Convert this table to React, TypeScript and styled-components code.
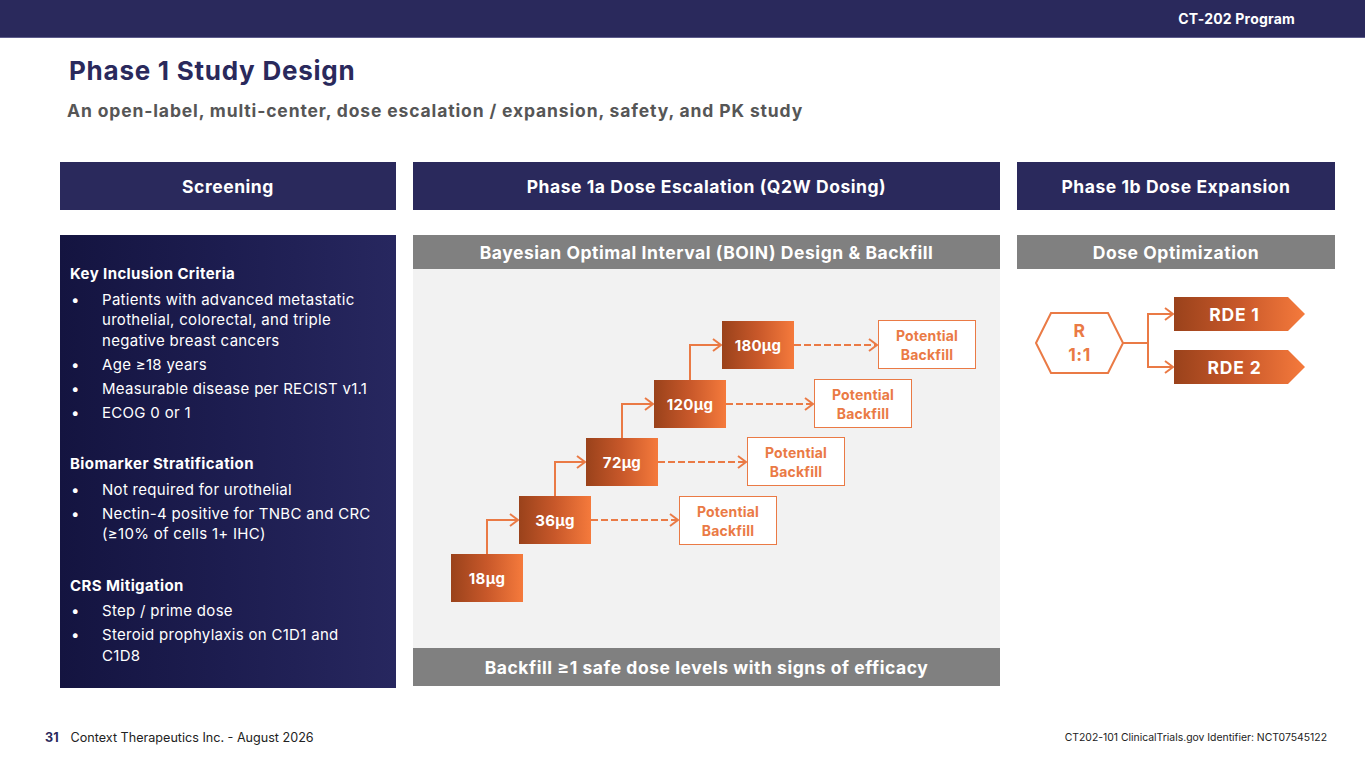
import React from "react";
import styled, { createGlobalStyle } from "styled-components";

const GlobalStyle = createGlobalStyle`
  html, body {
    margin: 0;
    padding: 0;
    background: #ffffff;
  }
  body {
    font-family: "Inter", "Noto Sans", "Liberation Sans", sans-serif;
  }
`;

const NAVY = "#2a295c";
const ORANGE = "#ea7a45";
const GRAY_BAR = "#808080";

const Page = styled.div`
  width: 1365px;
  height: 768px;
  overflow: hidden;
  display: flex;
  flex-direction: column;
  background: #fff;
`;

const TopBar = styled.header`
  height: 37px;
  background: ${NAVY};
  border-bottom: 1px solid #5d5c8c;
  display: flex;
  align-items: center;
  justify-content: flex-end;
  padding-right: 70px;
  color: #fff;
  font-weight: 700;
  font-size: 14px;
  letter-spacing: 0.2px;
`;

const Title = styled.h1`
  margin: 17px 0 0 69px;
  font-size: 26px;
  line-height: 32px;
  font-weight: 700;
  color: ${NAVY};
  letter-spacing: 0.75px;
`;

const Subtitle = styled.h2`
  margin: 13px 0 0 67px;
  font-size: 17.5px;
  line-height: 22px;
  font-weight: 700;
  color: #565656;
  letter-spacing: 0.86px;
`;

const Columns = styled.div`
  margin: 40px 0 0 60px;
  display: grid;
  grid-template-columns: 336px 587px 318px;
  column-gap: 17px;
  align-items: start;
`;

const Column = styled.section`
  display: flex;
  flex-direction: column;
  gap: 25px;
`;

const ColumnHeader = styled.div`
  height: 48px;
  background: ${NAVY};
  color: #fff;
  font-weight: 700;
  font-size: 17.5px;
  letter-spacing: 0.55px;
  display: flex;
  align-items: center;
  justify-content: center;
`;

const ScreeningBox = styled.div`
  height: 453px;
  box-sizing: border-box;
  padding: 29px 24px 0 10px;
  background: linear-gradient(90deg, #141440 0%, #1d1d50 50%, #27275f 100%);
  color: #fff;
  font-size: 15px;
  line-height: 20.5px;
  letter-spacing: 0.3px;
`;

const CriteriaGroup = styled.div`
  margin-bottom: 31px;
`;

const CriteriaTitle = styled.div`
  font-weight: 700;
  margin-bottom: 5px;
  letter-spacing: 0.4px;
`;

const BulletList = styled.ul`
  list-style: none;
  margin: 0;
  padding: 0;
  display: flex;
  flex-direction: column;
  gap: 3.5px;
`;

const Bullet = styled.li`
  display: grid;
  grid-template-columns: 32px 1fr;
  &::before {
    content: "•";
    padding-left: 1px;
  }
`;

const GrayBar = styled.div<{ $h: number }>`
  height: ${(p) => p.$h}px;
  background: ${GRAY_BAR};
  color: #fff;
  font-weight: 700;
  font-size: 17.5px;
  letter-spacing: 0.55px;
  display: flex;
  align-items: center;
  justify-content: center;
`;

const StagePanel = styled.div`
  display: flex;
  flex-direction: column;
`;

const Canvas = styled.div`
  position: relative;
  height: 379px;
  background: #f2f2f2;
`;

const Wires = styled.svg`
  position: absolute;
  inset: 0;
  width: 100%;
  height: 100%;
  overflow: visible;
`;

const DoseBox = styled.div<{ $x: number; $y: number }>`
  position: absolute;
  left: ${(p) => p.$x}px;
  top: ${(p) => p.$y}px;
  width: 72px;
  height: 48px;
  background: linear-gradient(90deg, #9a421b 0%, #c8582a 50%, #f57a3c 100%);
  color: #fff;
  font-weight: 700;
  font-size: 15px;
  letter-spacing: 0.3px;
  display: flex;
  align-items: center;
  justify-content: center;
`;

const BackfillBox = styled.div<{ $x: number; $y: number }>`
  position: absolute;
  left: ${(p) => p.$x}px;
  top: ${(p) => p.$y}px;
  width: 98px;
  height: 49px;
  box-sizing: border-box;
  background: #fff;
  border: 1.5px solid ${ORANGE};
  color: ${ORANGE};
  font-weight: 700;
  font-size: 14px;
  line-height: 19px;
  letter-spacing: 0.2px;
  text-align: center;
  display: flex;
  align-items: center;
  justify-content: center;
`;

const ExpansionCanvas = styled.div`
  position: relative;
  height: 140px;
`;

const HexLabel = styled.div`
  position: absolute;
  left: 19px;
  top: 44px;
  width: 87px;
  height: 60px;
  display: flex;
  flex-direction: column;
  align-items: center;
  justify-content: center;
  color: ${ORANGE};
  font-weight: 700;
  font-size: 17.5px;
  line-height: 24px;
  letter-spacing: 0.5px;
`;

const RdeArrow = styled.div<{ $y: number }>`
  position: absolute;
  left: 157px;
  top: ${(p) => p.$y}px;
  width: 131px;
  height: 34px;
  box-sizing: border-box;
  padding-right: 10px;
  clip-path: polygon(0 0, 87% 0, 100% 50%, 87% 100%, 0 100%);
  background: linear-gradient(90deg, #9a421b 0%, #c8582a 50%, #f57a3c 100%);
  color: #fff;
  font-weight: 700;
  font-size: 17.5px;
  letter-spacing: 0.8px;
  display: flex;
  align-items: center;
  justify-content: center;
`;

const Footer = styled.footer`
  margin-top: 40px;
  height: 18px;
  padding: 0 38px 0 45px;
  display: flex;
  align-items: center;
  justify-content: space-between;
  font-size: 12.6px;
  color: #222;
`;

const FooterLeft = styled.div`
  display: flex;
  align-items: center;
  gap: 12px;
`;

const PageNum = styled.span`
  font-weight: 700;
  color: ${NAVY};
`;

const FooterRight = styled.span`
  font-size: 10.4px;
`;

const doses = [
  { label: "18μg", x: 38, y: 285 },
  { label: "36μg", x: 106, y: 227 },
  { label: "72μg", x: 173, y: 169 },
  { label: "120μg", x: 241, y: 111 },
  { label: "180μg", x: 309, y: 52 },
];

const backfills = [
  { x: 266, y: 227 },
  { x: 334, y: 168 },
  { x: 401, y: 110 },
  { x: 465, y: 51 },
];

const criteria = [
  {
    title: "Key Inclusion Criteria",
    items: [
      "Patients with advanced metastatic urothelial, colorectal, and triple negative breast cancers",
      "Age ≥18 years",
      "Measurable disease per RECIST v1.1",
      "ECOG 0 or 1",
    ],
  },
  {
    title: "Biomarker Stratification",
    items: [
      "Not required for urothelial",
      "Nectin-4 positive for TNBC and CRC (≥10% of cells 1+ IHC)",
    ],
  },
  {
    title: "CRS Mitigation",
    items: ["Step / prime dose", "Steroid prophylaxis on C1D1 and C1D8"],
  },
];

const Chevron = ({ x, y }: { x: number; y: number }) => (
  <polyline
    points={`${x - 8},${y - 6} ${x},${y} ${x - 8},${y + 6}`}
    fill="none"
    stroke={ORANGE}
    strokeWidth={2}
  />
);

const EscalationWires = () => (
  <Wires>
    {doses.slice(0, -1).map((d, i) => {
      const next = doses[i + 1];
      const cx = d.x + 36;
      const ny = next.y + 24;
      return (
        <g key={`step-${i}`}>
          <polyline
            points={`${cx},${d.y} ${cx},${ny} ${next.x - 1},${ny}`}
            fill="none"
            stroke={ORANGE}
            strokeWidth={2}
          />
          <Chevron x={next.x - 1} y={ny} />
        </g>
      );
    })}
    {doses.slice(1).map((d, i) => {
      const b = backfills[i];
      const y = d.y + 24;
      return (
        <g key={`dash-${i}`}>
          <line
            x1={d.x + 72}
            y1={y}
            x2={b.x - 2}
            y2={y}
            stroke={ORANGE}
            strokeWidth={2}
            strokeDasharray="7 3"
          />
          <Chevron x={b.x - 1} y={y} />
        </g>
      );
    })}
  </Wires>
);

const ExpansionWires = () => (
  <Wires>
    <polygon
      points="19,74 34,44 91,44 106,74 91,104 34,104"
      fill="#fff"
      stroke={ORANGE}
      strokeWidth={2}
    />
    <polyline points="106,74 131,74" fill="none" stroke={ORANGE} strokeWidth={2} />
    <polyline
      points="155,45 131,45 131,98 155,98"
      fill="none"
      stroke={ORANGE}
      strokeWidth={2}
    />
    <Chevron x={156} y={45} />
    <Chevron x={156} y={98} />
  </Wires>
);

export default function App() {
  return (
    <Page>
      <GlobalStyle />
      <TopBar>CT-202 Program</TopBar>
      <Title>Phase 1 Study Design</Title>
      <Subtitle>
        An open-label, multi-center, dose escalation / expansion, safety, and PK study
      </Subtitle>

      <Columns>
        <Column>
          <ColumnHeader>Screening</ColumnHeader>
          <ScreeningBox>
            {criteria.map((group) => (
              <CriteriaGroup key={group.title}>
                <CriteriaTitle>{group.title}</CriteriaTitle>
                <BulletList>
                  {group.items.map((item) => (
                    <Bullet key={item}>
                      <span>{item}</span>
                    </Bullet>
                  ))}
                </BulletList>
              </CriteriaGroup>
            ))}
          </ScreeningBox>
        </Column>

        <Column>
          <ColumnHeader>Phase 1a Dose Escalation (Q2W Dosing)</ColumnHeader>
          <StagePanel>
            <GrayBar $h={34}>Bayesian Optimal Interval (BOIN) Design &amp; Backfill</GrayBar>
            <Canvas>
              <EscalationWires />
              {doses.map((d) => (
                <DoseBox key={d.label} $x={d.x} $y={d.y}>
                  {d.label}
                </DoseBox>
              ))}
              {backfills.map((b, i) => (
                <BackfillBox key={i} $x={b.x} $y={b.y}>
                  Potential
                  <br />
                  Backfill
                </BackfillBox>
              ))}
            </Canvas>
            <GrayBar $h={38}>Backfill ≥1 safe dose levels with signs of efficacy</GrayBar>
          </StagePanel>
        </Column>

        <Column>
          <ColumnHeader>Phase 1b Dose Expansion</ColumnHeader>
          <StagePanel>
            <GrayBar $h={34}>Dose Optimization</GrayBar>
            <ExpansionCanvas>
              <ExpansionWires />
              <HexLabel>
                <span>R</span>
                <span>1:1</span>
              </HexLabel>
              <RdeArrow $y={28}>RDE 1</RdeArrow>
              <RdeArrow $y={81}>RDE 2</RdeArrow>
            </ExpansionCanvas>
          </StagePanel>
        </Column>
      </Columns>

      <Footer>
        <FooterLeft>
          <PageNum>31</PageNum>
          <span>Context Therapeutics Inc. - August 2026</span>
        </FooterLeft>
        <FooterRight>CT202-101 ClinicalTrials.gov Identifier: NCT07545122</FooterRight>
      </Footer>
    </Page>
  );
}
